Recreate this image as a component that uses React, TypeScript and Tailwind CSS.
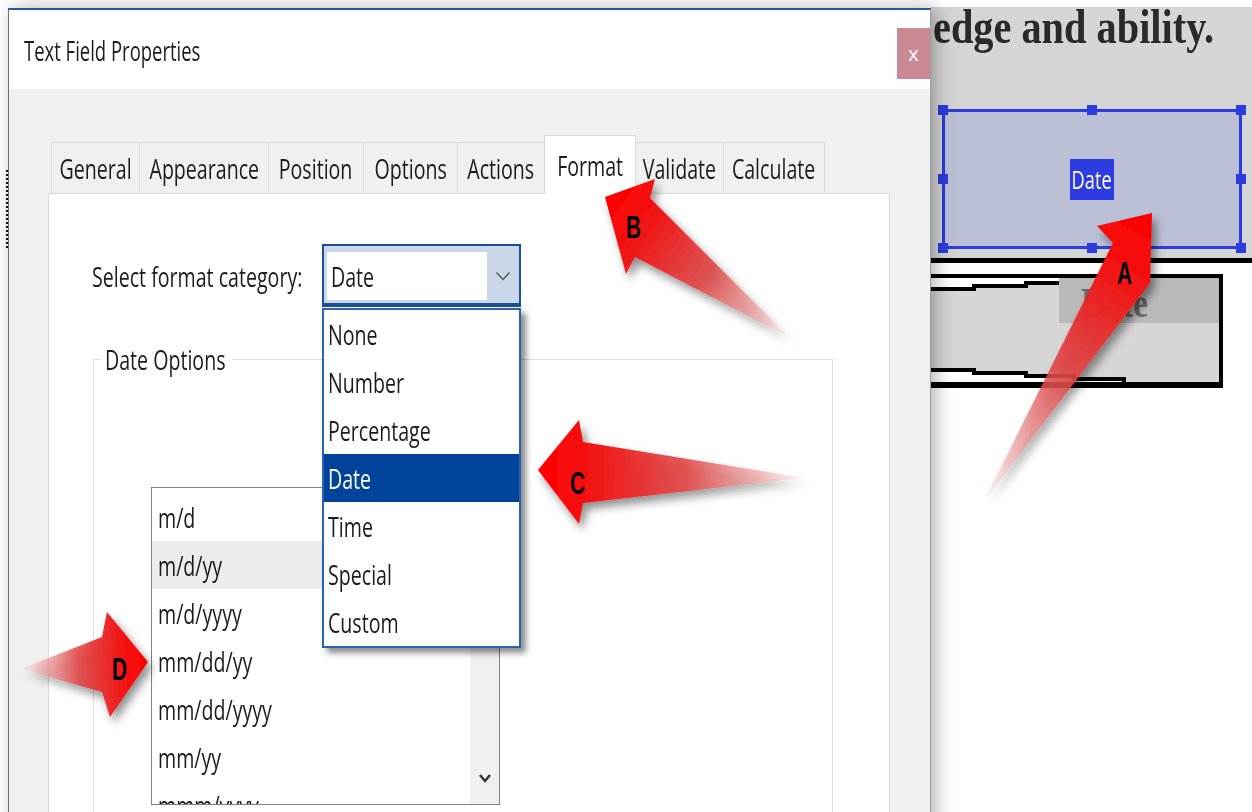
import React from "react";

const tabs = [
  { label: "General", w: "w-[89px]" },
  { label: "Appearance", w: "w-[130px]" },
  { label: "Position", w: "w-[96px]" },
  { label: "Options", w: "w-[95px]" },
  { label: "Actions", w: "w-[88px]" },
  { label: "Format", w: "w-[92px]", active: true },
  { label: "Validate", w: "w-[89px]" },
  { label: "Calculate", w: "w-[102px]" },
];

const categories = ["None", "Number", "Percentage", "Date", "Time", "Special", "Custom"];
const dateFormats = ["m/d", "m/d/yy", "m/d/yyyy", "mm/dd/yy", "mm/dd/yyyy", "mm/yy", "mmm/yyyy"];

// Segoe-style UI label, squeezed horizontally like the dialog's font
function Txt({ children, center }: { children: React.ReactNode; center?: boolean }) {
  return (
    <span
      className={
        center
          ? "inline-block whitespace-nowrap origin-center scale-x-[0.7]"
          : "inline-block whitespace-nowrap origin-left scale-x-[0.7]"
      }
    >
      {children}
    </span>
  );
}

function Chevron({ bold }: { bold?: boolean }) {
  return bold ? (
    <svg width="14" height="12" viewBox="0 0 14 12">
      <polyline points="2,3 7,9 12,3" fill="none" stroke="#3a3a3a" strokeWidth="2.6" />
    </svg>
  ) : (
    <svg width="16" height="10" viewBox="0 0 16 10">
      <polyline points="1.5,1.5 8,8.5 14.5,1.5" fill="none" stroke="#555" strokeWidth="1.4" />
    </svg>
  );
}

function Arrows() {
  const stops = (
    <>
      <stop offset="0" stopColor="#ff0000" />
      <stop offset="0.2" stopColor="#f21414" />
      <stop offset="0.55" stopColor="#e04646" stopOpacity="0.88" />
      <stop offset="0.85" stopColor="#ec9a9a" stopOpacity="0.55" />
      <stop offset="1" stopColor="#f8d0d0" stopOpacity="0.2" />
    </>
  );
  return (
    <svg className="absolute inset-0 z-20 pointer-events-none" width="1252" height="812" viewBox="0 0 1252 812">
      <defs>
        <filter id="arrowShadow" x="-30%" y="-30%" width="160%" height="160%">
          <feDropShadow dx="4" dy="6" stdDeviation="5" floodColor="#000" floodOpacity="0.45" />
        </filter>
        <linearGradient id="gradA" gradientUnits="userSpaceOnUse" x1="1150" y1="215" x2="983" y2="503">{stops}</linearGradient>
        <linearGradient id="gradB" gradientUnits="userSpaceOnUse" x1="607" y1="200" x2="790" y2="338">{stops}</linearGradient>
        <linearGradient id="gradC" gradientUnits="userSpaceOnUse" x1="540" y1="472" x2="805" y2="478">{stops}</linearGradient>
        <linearGradient id="gradD" gradientUnits="userSpaceOnUse" x1="148" y1="662" x2="21" y2="669">{stops}</linearGradient>
      </defs>
      <g filter="url(#arrowShadow)">
        <polygon points="1152,213 1097,226 1113,243 983,503 1150,283" fill="url(#gradA)" />
        <polygon points="605,197 655,179 650,198 790,338 635,257 626,274" fill="url(#gradB)" />
        <polygon points="538,470 579,420 583,442 805,478 583,503 579,524" fill="url(#gradC)" />
        <polygon points="148,662 107,612 102,637 21,669 102,692 110,717" fill="url(#gradD)" />
      </g>
      <g fontFamily="'Liberation Sans', Arial, sans-serif" fontWeight="700" fontSize="32" fill="#000">
        <text x="1117" y="284" textLength="15" lengthAdjust="spacingAndGlyphs">A</text>
        <text x="626" y="238" textLength="15" lengthAdjust="spacingAndGlyphs">B</text>
        <text x="570" y="494" textLength="15" lengthAdjust="spacingAndGlyphs">C</text>
        <text x="112" y="680" textLength="15" lengthAdjust="spacingAndGlyphs">D</text>
      </g>
    </svg>
  );
}

function DocumentPane() {
  const handle = "absolute w-[10px] h-[10px] bg-[#2c3ce0]";
  return (
    <div className="flex-1 flex flex-col bg-white">
      <div className="h-[7px]" />
      <div className="h-[256px] bg-[#d5d5d5] border-b-[5px] border-black flex flex-col">
        <div className="pl-[2px] h-[38px] leading-[40px] font-['Liberation_Serif',serif] font-bold text-[48px] text-[#2a2a2a]">
          <span className="inline-block whitespace-nowrap origin-left scale-x-[0.84]">edge and ability.</span>
        </div>
        {/* selected form field */}
        <div className="relative ml-[11px] mt-[64px] w-[300px] h-[140px] border-[3px] border-[#2c3ce0] bg-[#bcc0d6] flex items-center justify-center">
          <span className="w-[44px] h-[41px] bg-[#2c3ce0] text-white text-[26px] leading-none flex items-center justify-center">
            <Txt center>Date</Txt>
          </span>
          <span className={`${handle} -left-[7px] -top-[7px]`} />
          <span className={`${handle} left-1/2 -translate-x-1/2 -top-[7px]`} />
          <span className={`${handle} -right-[7px] -top-[7px]`} />
          <span className={`${handle} -left-[7px] top-1/2 -translate-y-1/2`} />
          <span className={`${handle} -right-[7px] top-1/2 -translate-y-1/2`} />
          <span className={`${handle} -left-[7px] -bottom-[7px]`} />
          <span className={`${handle} left-1/2 -translate-x-1/2 -bottom-[7px]`} />
          <span className={`${handle} -right-[7px] -bottom-[7px]`} />
        </div>
      </div>
      {/* scanned form box underneath */}
      <div className="relative mt-[11px] w-[292px] h-[114px] bg-[#d6d6d6]">
        <svg className="absolute inset-0" width="292" height="114" viewBox="0 0 292 114">
          <polygon points="0,0 292,0 292,4 143,4 143,8 95,8 95,11 43,11 43,14 0,14" fill="#fff" />
          <polygon points="0,97 43,97 43,99 95,99 95,102 143,102 143,105 193,105 193,109 292,109 292,114 0,114" fill="#fff" />
          <polyline points="0,15 43,15 43,12 95,12 95,9 143,9 143,3" fill="none" stroke="#000" strokeWidth="4" />
          <polyline points="0,96 43,96 43,99 95,99 95,102 143,102 143,105 193,105 193,109" fill="none" stroke="#000" strokeWidth="4" />
          <rect x="0" y="0" width="292" height="4" fill="#000" />
          <rect x="288" y="0" width="4" height="114" fill="#000" />
          <rect x="0" y="108" width="292" height="6" fill="#000" />
        </svg>
        <div className="relative flex justify-end pt-[4px] pr-[4px]">
          <div className="w-[160px] h-[45px] bg-[#b9b9b9] pl-[22px] pt-[6px] flex items-center font-['Liberation_Serif',serif] font-bold text-[42px] text-[#555]/80">
            <span className="inline-block whitespace-nowrap origin-left scale-x-[0.8]">Date</span>
          </div>
        </div>
      </div>
    </div>
  );
}

export default function App() {
  return (
    <div className="relative w-[1252px] h-[812px] overflow-hidden bg-white flex font-['Open_Sans',sans-serif] font-medium text-[28px] text-[#1c1c1c]">
      {/* sliver of the page visible left of the dialog */}
      <div className="w-2 shrink-0 pt-[170px]">
        <div className="ml-[6px] h-[78px] border-l-2 border-dotted border-black" />
      </div>

      {/* Text Field Properties dialog */}
      <div className="relative z-10 mt-2 w-[923px] h-[900px] shrink-0 flex flex-col bg-[#f0f0f0] border-t-2 border-t-[#2b579a] border-l border-l-[#6f6f6f] border-r border-r-[#9a9a9a] shadow-[5px_0_18px_rgba(0,0,0,0.3)]">
        <div className="h-[79px] bg-white flex items-start justify-between">
          <div className="h-full flex items-center pl-[15px]">
            <span className="inline-block whitespace-nowrap origin-left scale-x-[0.66]">Text Field Properties</span>
          </div>
          <button type="button" className="mt-[18px] w-[33px] h-[51px] bg-[#c98a93] text-white text-[20px] leading-none flex items-center justify-center">
            x
          </button>
        </div>

        <div className="flex-1 flex flex-col pl-[39px] pr-[40px] pt-[46px]">
          {/* tab strip */}
          <div className="flex items-end ml-[3px] h-[58px]">
            {tabs.map((t, i) => (
              <div
                key={t.label}
                className={`${t.w} ${i > 0 ? "-ml-px" : ""} ${
                  t.active ? "relative z-10 h-[59px] -mb-px bg-white" : "h-[51px] bg-[#f0f0f0]"
                } border border-b-0 border-[#d9d9d9] flex items-center justify-center`}
              >
                <Txt center>{t.label}</Txt>
              </div>
            ))}
          </div>

          {/* Format tab page */}
          <div className="flex-1 flex flex-col bg-white border border-[#d9d9d9]">
            <div className="flex items-center mt-[50px] ml-[43px]">
              <div className="w-[230px] shrink-0">
                <Txt>Select format category:</Txt>
              </div>
              <div className="relative">
                <div className="w-[199px] h-[63px] flex bg-[#c9d7e8] border-2 border-b-4 border-[#1b4f93] pt-[6px] pb-[3px] pl-[3px]">
                  <div className="w-[160px] bg-white flex items-center pl-[4px]">
                    <Txt>Date</Txt>
                  </div>
                  <div className="flex-1 flex items-center justify-center">
                    <Chevron />
                  </div>
                </div>

                {/* open category list */}
                <div className="absolute left-0 top-[64px] z-10 w-[199px] bg-white border-2 border-[#2b63b3] shadow-[5px_5px_6px_rgba(0,0,0,0.45)]">
                  {categories.map((c) => (
                    <div
                      key={c}
                      className={`h-[48px] flex items-center pl-[4px] ${c === "Date" ? "bg-[#00439a] text-white" : ""}`}
                    >
                      <Txt>{c}</Txt>
                    </div>
                  ))}
                </div>
              </div>
            </div>

            <fieldset className="mt-[32px] ml-[44px] w-[740px] h-[500px] border border-[#dcdcdc]">
              <legend className="ml-[7px] w-[131px] pl-[4px] h-[40px] leading-[40px]">
                <Txt>Date Options</Txt>
              </legend>
              <div className="mt-[108px] ml-[57px] w-[349px] h-[318px] flex bg-white border-[1.5px] border-[#7e8389] overflow-hidden">
                <div className="flex-1 pt-[5px]">
                  {dateFormats.map((f) => (
                    <div key={f} className={`h-[48px] flex items-center pl-[6px] ${f === "m/d/yy" ? "bg-[#ececec]" : ""}`}>
                      <Txt>{f}</Txt>
                    </div>
                  ))}
                </div>
                <div className="w-[29px] bg-[#f0f0f0] flex flex-col justify-end">
                  <div className="h-[52px] flex items-center justify-center">
                    <Chevron bold />
                  </div>
                </div>
              </div>
            </fieldset>
          </div>
        </div>
      </div>

      <DocumentPane />
      <Arrows />
    </div>
  );
}
